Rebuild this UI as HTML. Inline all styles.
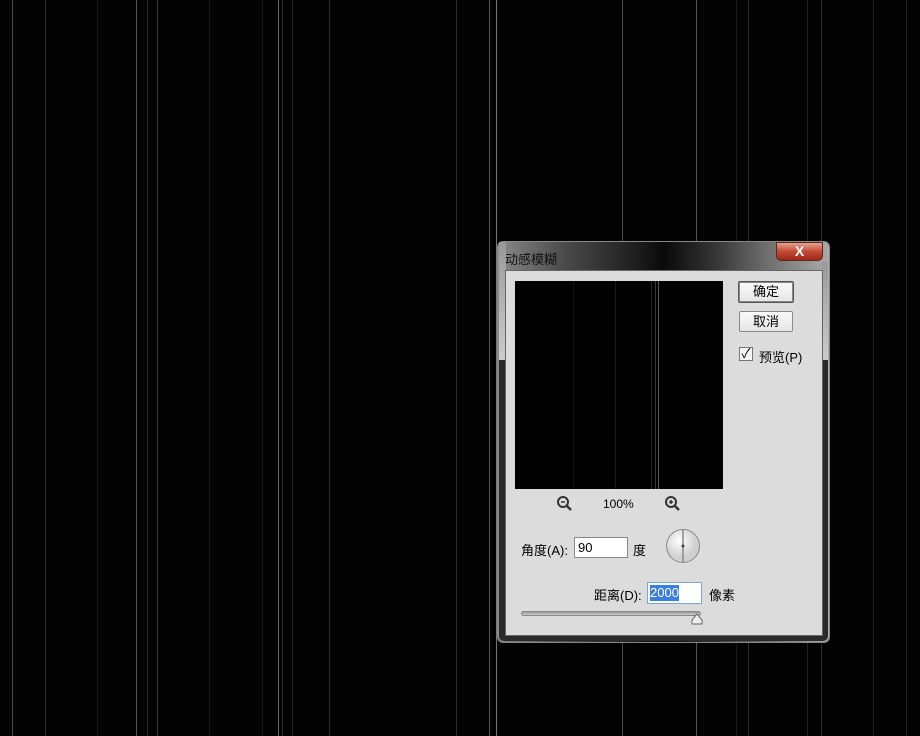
<!DOCTYPE html>
<html><head><meta charset="utf-8"><style>
body{margin:0;width:920px;height:736px;background:#030303;position:relative;overflow:hidden;font-family:"Liberation Sans","Noto Sans CJK SC",sans-serif;}
.l{position:absolute;top:0;height:736px;width:1px}
.a{position:absolute}
.f{font-size:12px;color:#000}
</style></head><body>
<div class="l" style="left:12px;background:#4a4a4a"></div>
<div class="l" style="left:45px;background:#2e2e2e"></div>
<div class="l" style="left:97px;background:#141414"></div>
<div class="l" style="left:136px;background:#555"></div>
<div class="l" style="left:147px;background:#2e2e2e"></div>
<div class="l" style="left:157px;background:#3a3a3a"></div>
<div class="l" style="left:209px;background:#171717"></div>
<div class="l" style="left:262px;background:#171717"></div>
<div class="l" style="left:278px;background:#666"></div>
<div class="l" style="left:282px;background:#2e2e2e"></div>
<div class="l" style="left:292px;background:#222"></div>
<div class="l" style="left:329px;background:#2e2e2e"></div>
<div class="l" style="left:456px;background:#2e2e2e"></div>
<div class="l" style="left:489px;background:#555"></div>
<div class="l" style="left:496px;background:#777"></div>
<div class="l" style="left:622px;background:#4a4a4a"></div>
<div class="l" style="left:696px;background:#555"></div>
<div class="l" style="left:736px;background:#171717"></div>
<div class="l" style="left:748px;background:#2e2e2e"></div>
<div class="l" style="left:807px;background:#222"></div>
<div class="l" style="left:821px;background:#2e2e2e"></div>
<div class="l" style="left:873px;background:#222"></div>
<div class="l" style="left:906px;background:#222"></div>

<div class="a" style="left:498px;top:242px;width:331px;height:400px;border-radius:5px;background:linear-gradient(90deg,#8a8a8a 0%,#4a4a4a 20%,#222 40%,#0a0a0a 50%,#333 65%,#6a6a6a 80%,#aaa 100%);box-shadow:0 0 0 1px #888"></div>
<div class="a" style="left:499px;top:360px;width:329px;height:281px;border-radius:0 0 5px 5px;background:#2a2a2a"></div>
<div class="a" style="left:499px;top:242px;width:7px;height:118px;background:linear-gradient(#999,#ccc)"></div>
<div class="a" style="left:822px;top:262px;width:6px;height:98px;background:linear-gradient(#999,#ccc)"></div>
<div class="a f" style="left:505px;top:249px;color:#111;font-size:13px">动感模糊</div>
<div class="a" style="left:776px;top:242px;width:47px;height:19px;border-radius:0 0 5px 5px;background:linear-gradient(#e8a090,#c24a35 50%,#a02818);border:1px solid #5a2a20;box-sizing:border-box;color:#fff;font-weight:bold;font-size:14px;text-align:center;line-height:16px">X</div>
<div class="a" style="left:505px;top:270px;width:318px;height:366px;background:#dcdcdc;border:1px solid #666;box-sizing:border-box"></div>
<div class="a" style="left:515px;top:281px;width:208px;height:208px;background:#000">
<div class="l" style="left:58px;height:208px;background:#141414"></div>
<div class="l" style="left:100px;height:208px;background:#1a1a1a"></div>
<div class="l" style="left:136px;height:208px;background:#222"></div>
<div class="l" style="left:140px;height:208px;background:#3a3a3a"></div>
<div class="l" style="left:143px;height:208px;background:#555"></div>
</div>
<div class="a f" style="left:738px;top:281px;width:56px;height:22px;box-sizing:border-box;border:1px solid #555;border-radius:2px;background:linear-gradient(#fafafa,#e6e6e6);box-shadow:inset 0 0 0 1px #888;text-align:center;line-height:20px;font-size:13px">确定</div>
<div class="a f" style="left:739px;top:311px;width:54px;height:21px;box-sizing:border-box;border:1px solid #888;border-radius:2px;background:linear-gradient(#fafafa,#e6e6e6);text-align:center;line-height:19px;font-size:13px">取消</div>
<div class="a" style="left:739px;top:347px;width:14px;height:14px;box-sizing:border-box;border:1px solid #777;background:#f4f4f4;font-size:13px;line-height:12px;text-align:center">✓</div>
<div class="a f" style="left:759px;top:347px;font-size:13px">预览(P)</div>
<svg class="a" style="left:556px;top:495px" width="20" height="18"><circle cx="7" cy="7" r="5" fill="none" stroke="#333" stroke-width="2"/><line x1="5" y1="7" x2="9" y2="7" stroke="#333" stroke-width="1.5"/><line x1="11" y1="11" x2="15" y2="15" stroke="#333" stroke-width="2.5"/></svg>
<svg class="a" style="left:664px;top:495px" width="20" height="18"><circle cx="7" cy="7" r="5" fill="none" stroke="#333" stroke-width="2"/><line x1="5" y1="7" x2="9" y2="7" stroke="#333" stroke-width="1.5"/><line x1="7" y1="5" x2="7" y2="9" stroke="#333" stroke-width="1.5"/><line x1="11" y1="11" x2="15" y2="15" stroke="#333" stroke-width="2.5"/></svg>
<div class="a f" style="left:603px;top:497px">100%</div>
<div class="a f" style="left:521px;top:540px;font-size:13px">角度(A):</div>
<div class="a f" style="left:574px;top:537px;width:54px;height:21px;box-sizing:border-box;border:1px solid #888;background:#fff;padding-left:3px;line-height:19px;font-size:13px">90</div>
<div class="a f" style="left:633px;top:540px;font-size:13px">度</div>
<svg class="a" style="left:665px;top:528px" width="36" height="36"><defs><radialGradient id="g" cx="0.4" cy="0.35"><stop offset="0" stop-color="#fff"/><stop offset="1" stop-color="#d0d0d0"/></radialGradient></defs><circle cx="18" cy="18" r="16.5" fill="url(#g)" stroke="#888"/><line x1="18" y1="2" x2="18" y2="34" stroke="#888" stroke-width="1.5"/><circle cx="18" cy="18" r="1.5" fill="#444"/></svg>
<div class="a f" style="left:594px;top:585px;font-size:13px">距离(D):</div>
<div class="a f" style="left:647px;top:582px;width:55px;height:22px;box-sizing:border-box;border:1px solid #7aa7d8;background:#fff;padding:2px 0 0 2px;font-size:13px"><span style="background:#3a7fe0;color:#fff;line-height:16px;display:inline-block">2000</span></div>
<div class="a f" style="left:709px;top:585px;font-size:13px">像素</div>
<div class="a" style="left:521px;top:611px;width:180px;height:5px;border-radius:3px;background:linear-gradient(#999,#ccc);border:1px solid #888;box-sizing:border-box"></div>
<svg class="a" style="left:691px;top:613px" width="14" height="12"><path d="M1 11 V7 L6 1 L11 7 V11 Z" fill="#eee" stroke="#666"/></svg>
</body></html>
